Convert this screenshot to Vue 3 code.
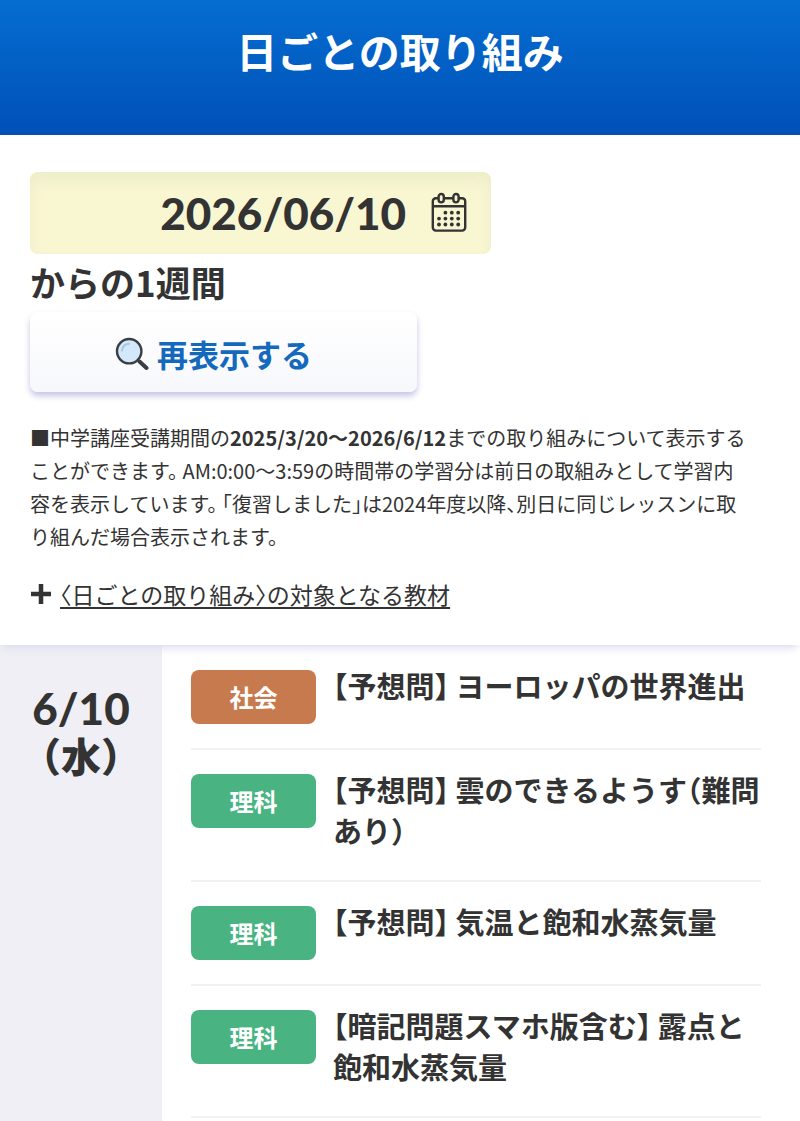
<script setup>
const lessons = [
  { subject: '社会', kind: 'social', title: '【予想問】 ヨーロッパの世界進出' },
  { subject: '理科', kind: 'science', title: '【予想問】 雲のできるようす（難問あり）' },
  { subject: '理科', kind: 'science', title: '【予想問】 気温と飽和水蒸気量' },
  { subject: '理科', kind: 'science', title: '【暗記問題スマホ版含む】 露点と飽和水蒸気量' },
]
const dots = [
  [17.4, 20.7], [23.8, 20.7], [30.2, 20.7],
  [11, 26.6], [17.4, 26.6], [23.8, 26.6], [30.2, 26.6],
  [11, 32.5], [17.4, 32.5], [23.8, 32.5], [30.2, 32.5],
]
</script>

<template>
  <div class="page">
    <header class="header"><h1>日ごとの取り組み</h1></header>
    <main>
      <section class="filter">
        <div class="date">
          <input type="text" value="2026/06/10" aria-label="開始日" />
          <svg class="calendar" viewBox="0 0 40 42" aria-hidden="true">
            <rect x="4.8" y="6.2" width="32.400" height="32.400" rx="3" />
            <path d="M4.800 14.200H37.200" />
            <rect class="ring" x="10.600" y="2" width="5.200" height="8.400" rx="2.600" />
            <rect class="ring" x="25.400" y="2" width="5.200" height="8.400" rx="2.600" />
            <circle v-for="(d, i) in dots" :key="i" class="dot" :cx="d[0]" :cy="d[1]" r="1.900" />
          </svg>
        </div>
        <p class="range">からの1週間</p>
        <button class="refresh" type="button">
          <svg class="search" viewBox="0 0 34 34" aria-hidden="true">
            <path class="handle" d="M24.500 24.500L31.500 31" />
            <path d="M22 22L25 25" />
            <circle cx="14.200" cy="14.200" r="12.200" />
            <path class="shine" d="M7 13.500C7.500 9.500 10 7.200 14 6.800" />
          </svg>
          <span>再表示する</span>
        </button>
        <p class="notes">■中学講座受講期間の<b>2025/3/20～2026/6/12</b>までの取り組みについて表示することができます。 AM:0:00～3:59の時間帯の学習分は前日の取組みとして学習内容を表示しています。 「復習しました」は2024年度以降、別日に同じレッスンに取り組んだ場合表示されます。</p>
        <div class="materials">
          <svg viewBox="0 0 22 22" aria-hidden="true"><path d="M11 1V21M1 11H21" /></svg>
          <a href="#">〈日ごとの取り組み〉の対象となる教材</a>
        </div>
      </section>
      <section class="day">
        <h2>6/10<br /><span>（水）</span></h2>
        <ul>
          <li v-for="(l, i) in lessons" :key="i">
            <span class="badge" :class="l.kind">{{ l.subject }}</span>
            <span class="title">{{ l.title }}</span>
          </li>
        </ul>
      </section>
    </main>
  </div>
</template>

<style>
body { background: #fff; }
</style>

<style scoped>
* { box-sizing: border-box; }
.page {
  color: #333;
  font-family: "Noto Sans CJK JP", sans-serif;
  font-feature-settings: "halt";
}
h1, h2, p, ul { margin: 0; padding: 0; }
.header {
  padding: 20px 16px 55px;
  background: linear-gradient(#056dd0, #0050b8);
  color: #fff;
  text-align: center;
}
h1 { font-size: 41px; line-height: 60px; font-weight: 700; }
.filter {
  position: relative;
  padding: 37px 30px 35px;
  box-shadow: 0 6px 8px -3px #dddbf0;
}
.date {
  display: flex;
  align-items: center;
  gap: 22px;
  width: 461px;
  max-width: 100%;
  height: 82px;
  padding: 0 23px 0 16px;
  border-radius: 8px;
  background: #f9f6d2;
  box-shadow: inset 0 8px 14px #ededc9;
}
.date input {
  flex: 1;
  min-width: 0;
  padding: 0;
  border: 0;
  background: transparent;
  color: #333;
  font-family: Lato, sans-serif;
  font-size: 44px;
  line-height: 60px;
  font-weight: 900;
  text-align: right;
}
.calendar { flex: none; width: 40px; height: 42px; fill: none; stroke: #333; stroke-width: 2.400; }
.calendar .ring { fill: #f7f5d1; }
.calendar .dot { fill: #333; stroke: none; }
.range { font-size: 35px; line-height: 56px; font-weight: 700; }
.refresh {
  display: flex;
  align-items: center;
  justify-content: center;
  gap: 8px;
  width: 387px;
  max-width: 100%;
  height: 80px;
  margin-top: 2px;
  padding: 4px 20px 0 0;
  border: 0;
  border-radius: 8px;
  background: linear-gradient(#fff, #f7f8fc);
  box-shadow: 0 4px 6px #c6c5e4;
  color: #1469bd;
  font-family: inherit;
  font-size: 31px;
  line-height: 44px;
  font-weight: 700;
}
.search { width: 34px; height: 34px; fill: none; stroke: #3a3d42; stroke-width: 2.400; stroke-linecap: round; }
.search circle { fill: #d3e8fa; }
.search .handle { stroke-width: 4; }
.search .shine { stroke: #a3c8e8; stroke-width: 2; }
.notes { margin: 29px 20px 0 0; font-size: 20px; line-height: 33px; }
.materials { display: flex; align-items: center; gap: 8px; margin-top: 25px; font-size: 23px; line-height: 32px; }
.materials svg { flex: none; width: 22px; height: 22px; fill: none; stroke: #333; stroke-width: 4.500; }
.materials a { color: #333; text-decoration-thickness: 2px; text-underline-offset: 3px; }
.day { display: grid; grid-template-columns: 162px 1fr; }
h2 {
  padding: 40px 0;
  background: #efeff5;
  font-family: Lato, "Noto Sans CJK JP", sans-serif;
  font-size: 44px;
  line-height: 47px;
  font-weight: 900;
  text-align: center;
}
h2 span { font-size: 40px; }
ul { padding: 1px 39px 3px 29px; list-style: none; }
li { display: flex; align-items: flex-start; gap: 17px; padding: 24px 0; border-bottom: 2px solid #f1f1f3; }
.badge {
  flex: none;
  width: 125px;
  height: 54px;
  border-radius: 8px;
  color: #fff;
  font-size: 24px;
  line-height: 54px;
  font-weight: 700;
  text-align: center;
}
.social { background: #c87a4f; }
.science { background: #49b382; }
.title { margin: -5px 0 5px; font-size: 29px; line-height: 41px; font-weight: 700; }
</style>
